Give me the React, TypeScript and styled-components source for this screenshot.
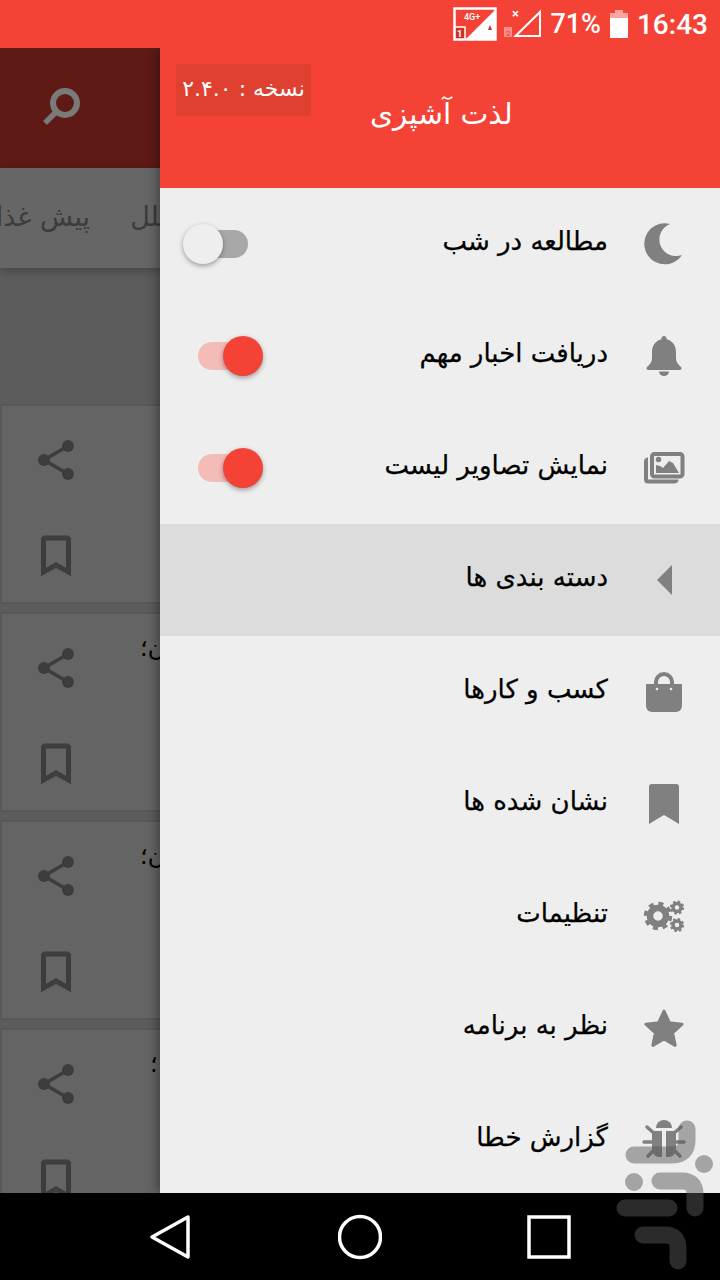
import styled, { createGlobalStyle } from "styled-components";
import type { ReactNode } from "react";

interface MenuItem {
  label: string;
  icon: ReactNode;
  toggle?: "on" | "off";
  selected?: boolean;
}

const menuItems: MenuItem[] = [
  {
    label: "مطالعه در شب",
    toggle: "off",
    icon: (
      <Glyph viewBox="0 0 44 44">
        <path d="M28 2A20.5 20.5 0 1 0 40 33A16 16 0 0 1 28 2Z" />
      </Glyph>
    ),
  },
  {
    label: "دریافت اخبار مهم",
    toggle: "on",
    icon: (
      <Glyph viewBox="0 0 44 44">
        <path d="M22 2c-1.500 0-2.500 1-2.500 2.500v.5C13 7 10 12 10 18v6c0 4-2 6-5 9q-1.500 2 1 3h32q2.500-1 1-3c-3-3-5-5-5-9v-6C34 12 31 7 24.500 5v-.5C24.500 3 23.500 2 22 2z" />
        <path d="M17 37.500a5 4.500 0 0 0 10 0z" />
      </Glyph>
    ),
  },
  {
    label: "نمایش تصاویر لیست",
    toggle: "on",
    icon: (
      <Glyph viewBox="0 0 44 44">
        <rect x="10" y="8" width="30.500" height="22.500" rx="2.500" fill="none" stroke="#808080" strokeWidth="4" />
        <path d="M6 13.500Q4 13.500 4 16V33Q4 35.500 6 35.500H32Q34.500 35.500 34.500 33.500" fill="none" stroke="#808080" strokeWidth="4" />
        <circle cx="16.500" cy="13.500" r="2.800" />
        <path d="M14 27V19l4 1 3 2 6-7 4 2 6 10z" />
      </Glyph>
    ),
  },
  {
    label: "دسته بندی ها",
    selected: true,
    icon: (
      <Glyph viewBox="0 0 44 44">
        <polygon points="15,22 30,7 30,37" />
      </Glyph>
    ),
  },
  {
    label: "کسب و کارها",
    icon: (
      <Glyph viewBox="0 0 44 44">
        <path d="M14 15V12a8 8 0 0 1 16 0v3" fill="none" stroke="#808080" strokeWidth="4" />
        <path d="M4 14H40V36a6 6 0 0 1-6 6H10a6 6 0 0 1-6-6Z" />
        <circle cx="15" cy="19" r="1.300" fill="#eeeeee" />
        <circle cx="29" cy="19" r="1.300" fill="#eeeeee" />
      </Glyph>
    ),
  },
  {
    label: "نشان شده ها",
    icon: (
      <Glyph viewBox="0 0 44 44">
        <path d="M7 5q0-3 3-3h24q3 0 3 3V42L22 33 7 42Z" />
      </Glyph>
    ),
  },
  {
    label: "تنظیمات",
    icon: (
      <Glyph viewBox="0 0 44 44">
        <g fill="none" stroke="#808080">
          <circle cx="16" cy="22" r="8" strokeWidth="6.500" />
          <circle cx="16" cy="22" r="12.500" strokeWidth="3.500" strokeDasharray="5 4.820" />
          <circle cx="35" cy="13.500" r="4" strokeWidth="3.500" />
          <circle cx="35" cy="13.500" r="6" strokeWidth="2.200" strokeDasharray="2.400 2.312" />
          <circle cx="35" cy="31" r="4" strokeWidth="3.500" />
          <circle cx="35" cy="31" r="6" strokeWidth="2.200" strokeDasharray="2.400 2.312" />
        </g>
      </Glyph>
    ),
  },
  {
    label: "نظر به برنامه",
    icon: (
      <Glyph viewBox="0 0 44 44">
        <polygon
          points="22,5 27.300,16.700 40.070,18.130 30.560,26.780 33.170,39.370 22,33 10.830,39.370 13.440,26.780 3.930,18.130 16.700,16.700"
          stroke="#808080"
          strokeWidth="3"
          strokeLinejoin="round"
        />
      </Glyph>
    ),
  },
  {
    label: "گزارش خطا",
    icon: (
      <Glyph viewBox="0 0 44 44">
        <path d="M14 10a8 8 0 0 1 16 0z" />
        <path d="M10 16q0-3 3-3h7v26h-4q-6-2-6-9zM34 16q0-3-3-3h-7v26h4q6-2 6-9z" />
        <path d="M5 9l8 7M39 9l-8 7M2 24h9M42 24h-9M6 38l7-7M38 38l-7-7" fill="none" stroke="#808080" strokeWidth="3.500" strokeLinecap="round" />
      </Glyph>
    ),
  },
];

const cardTitles = ["", "ن؛", "ن؛", "؛"];

export default function App() {
  return (
    <>
      <GlobalStyle />
      <Screen>
        <StatusBar>
          <svg width="100" height="48" viewBox="448 0 100 48">
            <rect x="453.500" y="8.500" width="41" height="31" fill="#f44336" stroke="#fff" strokeWidth="2.500" />
            <polygon points="465,39 494,10 494,39" fill="#fff" />
            <rect x="454" y="27" width="10" height="12" fill="#c93429" stroke="#fff" strokeWidth="1.500" />
            <text x="463" y="20" fontFamily="Roboto, sans-serif" fontSize="9" fill="#fff">4G+</text>
            <text x="456" y="37" fontFamily="Roboto, sans-serif" fontSize="9" fontWeight="700" fill="#fff">1</text>
            <polygon points="487,30 489,25 491,30" fill="#c93429" />
            <text x="511" y="18" fontFamily="Roboto, sans-serif" fontSize="13" fontWeight="700" fill="#fff">×</text>
            <polygon points="514.500,36 539,12 539,36" fill="none" stroke="#fff" strokeWidth="2" />
            <rect x="503" y="27" width="8" height="10" fill="#f98f86" />
            <text x="505" y="36" fontFamily="Roboto, sans-serif" fontSize="8" fill="#f44336">2</text>
          </svg>
          <StatusText>71%</StatusText>
          <svg width="18" height="28" viewBox="0 0 18 28">
            <path d="M5 0h8v3h5v6H0V3h5z" fill="#fba59e" />
            <rect y="8" width="18" height="20" fill="#fff" />
          </svg>
          <StatusTime>16:43</StatusTime>
        </StatusBar>
        <Main>
          <BackPanel>
            <BackBar>
              <svg width="48" height="48" viewBox="0 0 48 48">
                <circle cx="29" cy="19" r="12" fill="none" stroke="#7a7a7a" strokeWidth="6" />
                <path d="M20 28L9 39" stroke="#7a7a7a" strokeWidth="5.500" />
              </svg>
            </BackBar>
            <BackTabs dir="rtl">
              <BackTab $first>ملل</BackTab>
              <BackTab>پیش غذا</BackTab>
            </BackTabs>
            <BackList>
              {cardTitles.map((title, i) => (
                <BackCard key={i}>
                  <CardActions>
                    <svg width="48" height="48" viewBox="0 0 48 48" fill="#3d3d3d">
                      <path d="M36 10L12 24L36 38" fill="none" stroke="#3d3d3d" strokeWidth="3.500" />
                      <circle cx="36" cy="10" r="6" />
                      <circle cx="12" cy="24" r="6" />
                      <circle cx="36" cy="38" r="6" />
                    </svg>
                    <svg width="48" height="48" viewBox="0 0 48 48">
                      <path d="M11.500 8q0-2 2-2h21q2 0 2 2V40L24 33 11.500 40Z" fill="none" stroke="#3d3d3d" strokeWidth="5" />
                    </svg>
                  </CardActions>
                  <CardTitle $short={title.length === 1}>{title}</CardTitle>
                </BackCard>
              ))}
            </BackList>
          </BackPanel>
          <Drawer>
            <DrawerHeader>
              <VersionBadge>نسخه : ۲.۴.۰</VersionBadge>
              <AppTitle>لذت آشپزی</AppTitle>
            </DrawerHeader>
            <Menu dir="rtl">
              {menuItems.map((item) => (
                <MenuRow key={item.label} $selected={item.selected}>
                  <IconSlot>{item.icon}</IconSlot>
                  <MenuLabel>{item.label}</MenuLabel>
                  {item.toggle && (
                    <Toggle $on={item.toggle === "on"}>
                      <ToggleKnob $on={item.toggle === "on"} />
                    </Toggle>
                  )}
                </MenuRow>
              ))}
            </Menu>
          </Drawer>
        </Main>
        <NavBar>
          <svg width="44" height="48" viewBox="0 0 44 48">
            <polygon points="4,24 40,4 40,44" fill="none" stroke="#fff" strokeWidth="3.500" strokeLinejoin="round" />
          </svg>
          <svg width="44" height="48" viewBox="0 0 44 48">
            <circle cx="22" cy="24" r="20.500" fill="none" stroke="#fff" strokeWidth="3.500" />
          </svg>
          <svg width="44" height="48" viewBox="0 0 44 48">
            <rect x="2" y="4" width="40" height="40" fill="none" stroke="#fff" strokeWidth="3.500" />
          </svg>
        </NavBar>
        <Watermark viewBox="610 1115 110 165">
          <g fill="none" stroke="rgb(88,88,88)" strokeWidth="17" strokeLinecap="round">
            <path d="M634 1155H672Q687 1155 687 1140V1129" />
            <path d="M660 1181H682Q695 1181 695 1194V1208" />
            <path d="M625 1208H669" />
            <path d="M643 1235H665Q678 1235 678 1248V1261" />
          </g>
          <circle cx="704" cy="1164" r="9" fill="rgb(88,88,88)" />
          <circle cx="634" cy="1182" r="9" fill="rgb(88,88,88)" />
        </Watermark>
      </Screen>
    </>
  );
}

function Glyph(props: React.SVGProps<SVGSVGElement>) {
  return <svg width="44" height="44" fill="#808080" {...props} />;
}

const GlobalStyle = createGlobalStyle`
  html, body {
    margin: 0;
    padding: 0;
    background: #000;
  }
  * {
    box-sizing: border-box;
  }
`;

const Screen = styled.div`
  position: relative;
  display: flex;
  flex-direction: column;
  width: 720px;
  height: 1280px;
  overflow: hidden;
  font-family: "DejaVu Sans", "Noto Sans", sans-serif;
`;

const StatusBar = styled.div`
  display: flex;
  align-items: center;
  justify-content: flex-end;
  flex: 0 0 48px;
  padding-right: 12px;
  background: #f44336;
  color: #fff;
  font-family: Roboto, sans-serif;
  font-weight: 500;
`;

const StatusText = styled.span`
  margin: 0 9px 0 1px;
  font-size: 27px;
`;

const StatusTime = styled.span`
  margin-left: 9px;
  font-size: 28px;
`;

const Main = styled.div`
  display: flex;
  flex: 1;
  min-height: 0;
  overflow: hidden;
`;

const BackPanel = styled.div`
  display: flex;
  flex-direction: column;
  flex: 0 0 160px;
  overflow: hidden;
  background: #5c5c5c;
`;

const BackBar = styled.div`
  display: flex;
  align-items: center;
  flex: 0 0 120px;
  padding-left: 36px;
  background: #5f1a16;
`;

const BackTabs = styled.div`
  display: flex;
  align-items: center;
  flex: 0 0 100px;
  gap: 40px;
  white-space: nowrap;
  background: #666;
  box-shadow: 0 3px 8px rgba(0, 0, 0, 0.25);
  color: #3c3c3c;
  font-size: 27px;
`;

const BackTab = styled.span<{ $first?: boolean }>`
  flex: none;
  margin-right: ${(p) => (p.$first ? "-14px" : "0")};
  margin-top: -4px;
`;

const BackList = styled.div`
  display: flex;
  flex-direction: column;
  gap: 8px;
  padding-top: 136px;
`;

const BackCard = styled.div`
  display: flex;
  flex: 0 0 200px;
  width: 200px;
  background: #646464;
  border: 2px solid #585858;
  border-right: 0;
`;

const CardActions = styled.div`
  display: flex;
  flex-direction: column;
  align-items: center;
  gap: 48px;
  flex: 0 0 108px;
  padding-top: 30px;
`;

const CardTitle = styled.div<{ $short: boolean }>`
  margin: 20px 0 0 ${(p) => (p.$short ? "40px" : "30px")};
  color: #000;
  font-size: 24px;
  white-space: nowrap;
  direction: rtl;
`;

const Drawer = styled.div`
  position: relative;
  display: flex;
  flex-direction: column;
  flex: 1;
  min-width: 0;
  background: #eeeeee;
  box-shadow: -3px 0 10px rgba(0, 0, 0, 0.35);
`;

const DrawerHeader = styled.div`
  display: flex;
  flex: 0 0 140px;
  padding: 16px 0 0 16px;
  background: #f44336;
  color: #fff;
`;

const VersionBadge = styled.div`
  display: flex;
  align-items: center;
  justify-content: center;
  width: 135px;
  height: 52px;
  padding-bottom: 4px;
  background: #e04030;
  direction: rtl;
  font-size: 22px;
`;

const AppTitle = styled.div`
  margin: 30px 0 0 59px;
  direction: rtl;
  font-size: 29.5px;
  line-height: 40px;
`;

const Menu = styled.div`
  display: flex;
  flex-direction: column;
`;

const MenuRow = styled.div<{ $selected?: boolean }>`
  display: flex;
  align-items: center;
  flex: 0 0 112px;
  padding-right: 34px;
  background: ${(p) => (p.$selected ? "#dcdcdc" : "transparent")};
`;

const IconSlot = styled.div`
  display: flex;
  align-items: center;
  justify-content: center;
  flex: 0 0 44px;
  height: 44px;
  margin-left: 34px;
`;

const MenuLabel = styled.div`
  margin-top: -6px;
  color: #000;
  font-size: 26px;
  -webkit-text-stroke: 0.25px #000;
  white-space: nowrap;
`;

const Toggle = styled.div<{ $on: boolean }>`
  position: relative;
  flex: 0 0 60px;
  height: 28px;
  margin-right: auto;
  margin-left: ${(p) => (p.$on ? "38px" : "28px")};
  border-radius: 14px;
  background: ${(p) => (p.$on ? "#f4bcb7" : "#a8a8a8")};
`;

const ToggleKnob = styled.div<{ $on: boolean }>`
  position: absolute;
  top: -6px;
  ${(p) => (p.$on ? "right: -5px;" : "left: -5px;")}
  width: 40px;
  height: 40px;
  border-radius: 50%;
  background: ${(p) => (p.$on ? "#f44336" : "#eeeeee")};
  box-shadow: 0 2px 5px rgba(0, 0, 0, 0.35);
`;

const NavBar = styled.div`
  display: flex;
  align-items: center;
  gap: 145.5px;
  flex: 0 0 87px;
  padding-left: 148px;
  background: #000;
`;

const Watermark = styled.svg`
  position: absolute;
  left: 610px;
  top: 1115px;
  width: 110px;
  height: 165px;
  opacity: 0.49;
`;
